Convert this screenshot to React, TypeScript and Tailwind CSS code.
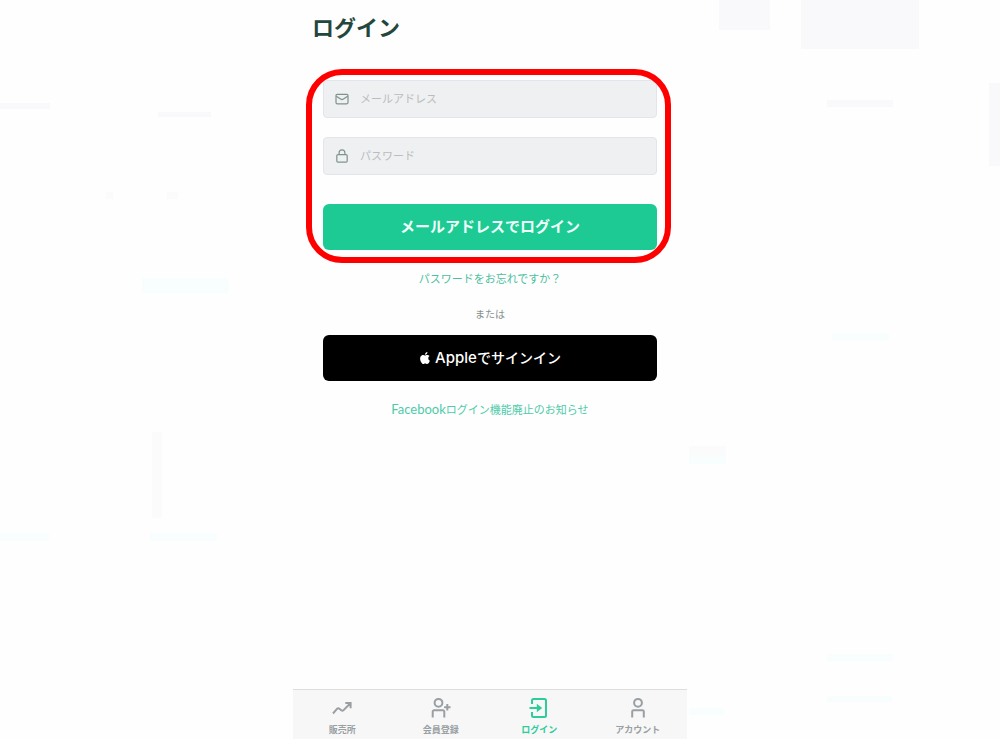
import React from 'react';

const iconProps = {
  viewBox: '0 0 24 24',
  fill: 'none',
  stroke: 'currentColor',
  strokeWidth: 2,
  'aria-hidden': true,
} as const;

const MailIcon = () => (
  <svg viewBox="0 0 14 14" fill="none" stroke="currentColor" aria-hidden="true" className="h-3.5 w-3.5">
    <rect x="1" y="2.4" width="12" height="9.4" rx="1.2" strokeWidth="1.2" />
    <path d="M1.3 4.2 5.6 7.1Q7 8 8.4 7.1L12.7 4.2" strokeWidth="1.2" />
  </svg>
);

const LockIcon = () => (
  <svg viewBox="0 0 14 14" fill="none" stroke="currentColor" aria-hidden="true" className="h-3.5 w-3.5">
    <rect x="1.8" y="5.6" width="10.4" height="7.6" rx="1.2" strokeWidth="1.2" />
    <path d="M4.1 5.6V3.7a2.900 2.900 0 0 1 5.800 0v1.900" strokeWidth="1.2" />
  </svg>
);

const AppleIcon = () => (
  <svg viewBox="0 0 24 24" fill="currentColor" aria-hidden="true" className="h-3 w-3">
    <path d="M12.152 6.896c-.948 0-2.415-1.078-3.96-1.04-2.04.027-3.91 1.183-4.961 3.014-2.117 3.675-.546 9.103 1.519 12.09 1.013 1.454 2.208 3.09 3.792 3.039 1.52-.065 2.09-.987 3.935-.987 1.831 0 2.35.987 3.96.948 1.637-.026 2.676-1.48 3.676-2.948 1.156-1.688 1.636-3.325 1.662-3.415-.039-.013-3.182-1.221-3.22-4.857-.026-3.04 2.48-4.494 2.597-4.559-1.429-2.09-3.623-2.324-4.39-2.376-2-.156-3.675 1.09-4.61 1.09zM15.53 3.83c.843-1.012 1.4-2.427 1.245-3.83-1.207.052-2.662.805-3.532 1.818-.78.896-1.454 2.338-1.273 3.714 1.338.104 2.715-.688 3.559-1.701" />
  </svg>
);

const TrendIcon = () => (
  <svg {...iconProps} className="h-6 w-6">
    <path d="M3 17.5 7.2 12.7Q8.2 11.7 9.4 12.7L11.3 14.3Q12.5 15.2 13.6 14.1L20.3 7.3M15.3 7H20.6V12.3" />
  </svg>
);

const RegisterIcon = () => (
  <svg {...iconProps} className="h-6 w-6">
    <circle cx="9.5" cy="6.8" r="3.9" />
    <path d="M3.7 21.5V15.600a1.400 1.400 0 0 1 1.400-1.400h8.800a1.400 1.400 0 0 1 1.400 1.400v5.900M18.300 8v6.400M15.100 11.200h6.400" />
  </svg>
);

const LoginIcon = () => (
  <svg {...iconProps} className="h-6 w-6">
    <path d="M5 8V4.500a1.500 1.500 0 0 1 1.500-1.500h11a1.500 1.500 0 0 1 1.500 1.500v15a1.500 1.500 0 0 1-1.500 1.500h-11a1.500 1.500 0 0 1-1.500-1.500V16M2.500 12H11" />
    <path d="M9.800 7.800 15.200 12 9.800 16.200Z" fill="currentColor" stroke="none" />
  </svg>
);

const AccountIcon = () => (
  <svg {...iconProps} className="h-6 w-6">
    <circle cx="12" cy="6.8" r="3.9" />
    <path d="M6.200 21.500V15.600a1.400 1.400 0 0 1 1.400-1.400h8.800a1.400 1.400 0 0 1 1.400 1.400v5.900" />
  </svg>
);

const tabs = [
  { label: '販売所', icon: <TrendIcon /> },
  { label: '会員登録', icon: <RegisterIcon /> },
  { label: 'ログイン', icon: <LoginIcon />, active: true },
  { label: 'アカウント', icon: <AccountIcon /> },
];

// Faint blocks behind the phone column
const Backdrop = () => (
  <svg aria-hidden="true" className="pointer-events-none absolute inset-0 h-full w-full">
    <g fill="#f9f9fb">
      <rect x="719" y="0" width="51" height="30" />
      <rect x="801" y="0" width="118" height="49" />
      <rect x="989" y="83" width="11" height="83" />
      <rect x="0" y="103" width="50" height="6" />
      <rect x="158" y="112" width="53" height="5" />
      <rect x="827" y="100" width="66" height="7" />
    </g>
    <g fill="#fbfbfb">
      <rect x="106" y="192" width="7" height="7" />
      <rect x="167" y="192" width="11" height="7" />
      <rect x="152" y="432" width="10" height="86" />
      <rect x="689" y="446" width="37" height="10" />
    </g>
    <g fill="#f8fdfd">
      <rect x="142" y="278" width="86" height="15" />
      <rect x="832" y="333" width="57" height="7" />
      <rect x="689" y="456" width="37" height="8" />
      <rect x="0" y="533" width="49" height="8" />
      <rect x="150" y="533" width="67" height="8" />
      <rect x="827" y="654" width="66" height="7" />
      <rect x="827" y="696" width="65" height="6" />
      <rect x="689" y="708" width="35" height="7" />
    </g>
  </svg>
);

const App = () => {
  return (
    <div className="relative min-h-screen bg-[#fefefe] font-['Noto_Sans_CJK_JP',sans-serif]">
      <Backdrop />
      <div className="relative flex min-h-screen justify-center sm:pr-5">
        <div className="flex w-full max-w-[394px] flex-col bg-[#fefefe]">
          <main className="px-[30px] pt-2.5">
            <h1 className="-ml-[11px] text-[22px] font-bold leading-8 text-[#24473d]">ログイン</h1>

            {/* Login form */}
            <form className="relative mt-[38px]" onSubmit={(e) => e.preventDefault()}>
              <label className="flex h-[38px] items-center gap-[11px] rounded-sm border border-[#e2e5eb] bg-[#eef0f1] px-[11px] text-[#80928c]">
                <MailIcon />
                <input
                  type="email"
                  aria-label="メールアドレス"
                  placeholder="メールアドレス"
                  className="min-w-0 flex-1 bg-transparent pb-0.5 text-[11px] text-gray-700 outline-none placeholder:text-[#b9bdbd]"
                />
              </label>
              <label className="mt-[19px] flex h-[38px] items-center gap-[11px] rounded-sm border border-[#e2e5eb] bg-[#eef0f1] px-[11px] text-[#80928c]">
                <LockIcon />
                <input
                  type="password"
                  aria-label="パスワード"
                  placeholder="パスワード"
                  className="min-w-0 flex-1 bg-transparent pb-0.5 text-[11px] text-gray-700 outline-none placeholder:text-[#b9bdbd]"
                />
              </label>
              <button type="submit" className="mt-[29px] h-[46px] w-full rounded-md bg-[#1dca94] pb-0.5 text-[15px] font-bold text-[#f0fffa]">
                メールアドレスでログイン
              </button>

              {/* Highlight frame */}
              <div className="pointer-events-none absolute -bottom-[13px] -left-[17px] -right-[14px] -top-[11px] rounded-[36px] border-6 border-[#ff0000]" />
            </form>

            <div className="flex flex-col items-center">
              <a href="#" className="mt-5 text-[11px] leading-4 text-[#4dbf9f]">パスワードをお忘れですか？</a>
              <p className="mt-5 text-[10px] leading-4 text-[#84908c]">または</p>
              <button type="button" className="mt-[13px] flex h-[46px] w-full items-center justify-center gap-1 rounded-md bg-black text-sm font-medium text-white">
                <AppleIcon />
                <span><span className="font-['Inter'] text-[15px]">Apple</span>でサインイン</span>
              </button>
              <a href="#" className="mt-5 text-[11px] leading-4 text-[#4fcba9]">
                <span className="font-['Lato'] text-[13px] leading-4">Facebook</span>ログイン機能廃止のお知らせ
              </a>
            </div>
          </main>

          {/* Bottom tabs */}
          <nav className="mt-auto grid h-[50px] grid-cols-4 border-t border-[#dedede] bg-[#f7f7f8]">
            {tabs.map((tab) => (
              <a
                key={tab.label}
                href="#"
                aria-current={tab.active ? 'page' : undefined}
                className={`flex flex-col items-center pt-1.5 ${tab.active ? 'text-[#2dcc9a]' : 'text-[#999fa2]'}`}
              >
                {tab.icon}
                <span className="mt-0.5 text-[9px] font-bold leading-4">{tab.label}</span>
              </a>
            ))}
          </nav>
        </div>
      </div>
    </div>
  );
};

export default App;
